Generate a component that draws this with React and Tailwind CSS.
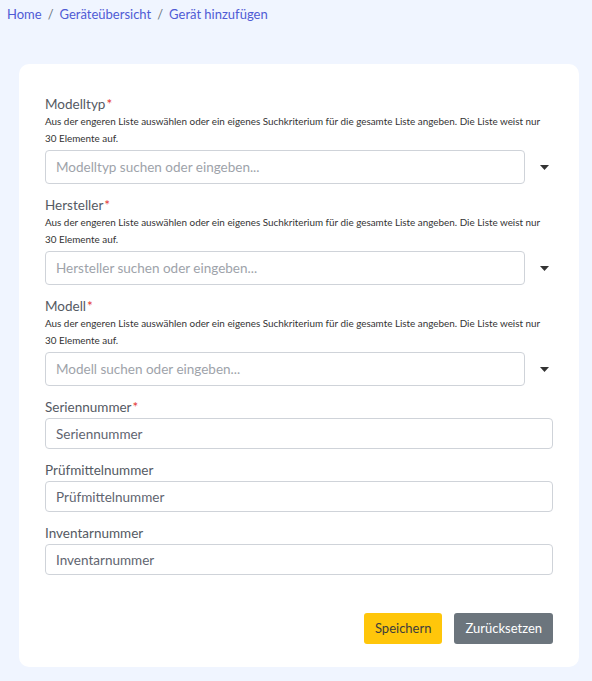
const HELP =
  'Aus der engeren Liste auswählen oder ein eigenes Suchkriterium für die gesamte Liste angeben. Die Liste weist nur 30 Elemente auf.';

const Caret = () => (
  <svg width="9" height="5" viewBox="0 0 9 5" className="fill-[#333]">
    <path d="M0 0h9L4.5 5z" />
  </svg>
);

const Label = ({ children, required }) => (
  <label className="block text-[13.5px] leading-[17px] text-[#555a63]">
    {children}
    {required && <span className="text-[#e3342f] ml-[1px]">*</span>}
  </label>
);

const SearchField = ({ label, placeholder }) => (
  <div className="mb-[13px]">
    <Label required>{label}</Label>
    <p className="text-[9.9px] leading-[17px] text-[#333] pr-[4px]">{HELP}</p>
    <div className="flex items-center mt-[3px]">
      <input
        placeholder={placeholder}
        className="w-[480px] h-[34px] rounded-[4px] border border-[#cfd3d9] px-[10px] text-[13.5px] text-[#555] placeholder:text-[#9ea3aa] outline-none"
      />
      <div className="flex-1 flex justify-center pl-[11px]">
        <Caret />
      </div>
    </div>
  </div>
);

const TextField = ({ label, required }) => (
  <div className="mb-[13px]">
    <Label required={required}>{label}</Label>
    <input
      placeholder={label}
      className="mt-[2px] w-full h-[31px] rounded-[4px] border border-[#cfd3d9] px-[10px] text-[13.5px] text-[#555] placeholder:text-[#5f6570] outline-none"
    />
  </div>
);

export default function App() {
  return (
    <div className="min-h-[681px] bg-[#f0f5ff] pt-[5px] pb-[13px]" style={{ fontFamily: 'Lato, "Noto Sans", sans-serif' }}>
      {/* Breadcrumb */}
      <nav className="flex items-center gap-[6px] px-[7px] text-[13px] leading-[18px] text-[#4f5bd5]">
        <span>Home</span>
        <span className="text-[#6c757d]">/</span>
        <span>Geräteübersicht</span>
        <span className="text-[#6c757d]">/</span>
        <span>Gerät hinzufügen</span>
      </nav>

      {/* Card */}
      <div className="mt-[41px] ml-[19px] mr-[13px] bg-white rounded-[10px] pt-[32px] pl-[26px] pr-[26px] pb-[23px]">
        <SearchField label="Modelltyp" placeholder="Modelltyp suchen oder eingeben..." />
        <SearchField label="Hersteller" placeholder="Hersteller suchen oder eingeben..." />
        <SearchField label="Modell" placeholder="Modell suchen oder eingeben..." />
        <TextField label="Seriennummer" required />
        <TextField label="Prüfmittelnummer" />
        <TextField label="Inventarnummer" />

        <div className="flex justify-end gap-[12px] mt-[38px]">
          <button className="h-[31px] px-[11px] rounded-[3px] bg-[#ffc60a] text-[13px] text-[#3d3d3d]">Speichern</button>
          <button className="h-[31px] px-[11px] rounded-[3px] bg-[#6c757d] text-[13px] text-white">Zurücksetzen</button>
        </div>
      </div>
    </div>
  );
}
